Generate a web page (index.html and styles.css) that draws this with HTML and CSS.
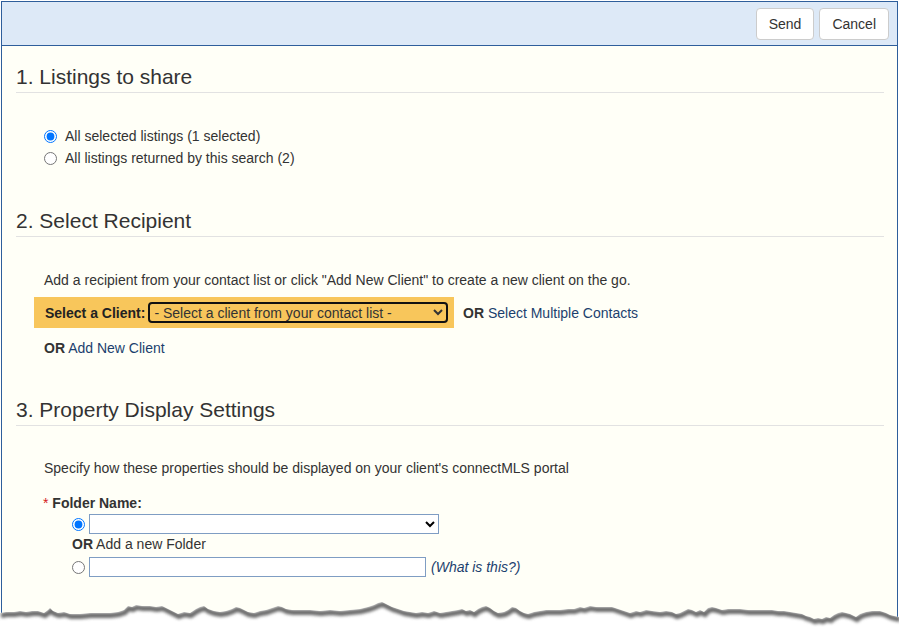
FILE: index.html
```html
<!DOCTYPE html>
<html>
<head>
<meta charset="utf-8">
<link rel="stylesheet" href="styles.css">
</head>
<body>
<div class="frame">
  <div class="toolbar">
    <button class="btn">Send</button>
    <button class="btn">Cancel</button>
  </div>
  <div class="content">
    <section class="sec sec1">
      <h2 class="sec-title">1. Listings to share</h2>
      <div class="sec-body radios">
        <label class="radio-row"><input type="radio" name="listings" checked><span>All selected listings (1 selected)</span></label>
        <label class="radio-row"><input type="radio" name="listings"><span>All listings returned by this search (2)</span></label>
      </div>
    </section>
    <section class="sec sec2">
      <h2 class="sec-title">2. Select Recipient</h2>
      <div class="sec-body">
        <p class="note">Add a recipient from your contact list or click "Add New Client" to create a new client on the go.</p>
        <div class="client-row">
          <div class="client-box">
            <span class="client-label">Select a Client:</span>
            <select class="client-select"><option>- Select a client from your contact list -</option></select>
          </div>
          <span class="or-line"><b>OR</b> <a class="link">Select Multiple Contacts</a></span>
        </div>
        <p class="or-line add-client"><b>OR</b> <a class="link">Add New Client</a></p>
      </div>
    </section>
    <section class="sec sec3">
      <h2 class="sec-title">3. Property Display Settings</h2>
      <div class="sec-body">
        <p class="note">Specify how these properties should be displayed on your client's connectMLS portal</p>
        <div class="folder">
          <div class="folder-label"><span class="req">*</span> <b>Folder Name:</b></div>
          <div class="folder-opts">
            <div class="folder-row first"><input type="radio" name="folder" checked><select class="folder-select"><option></option></select></div>
            <div class="or-line folder-or"><b>OR</b> Add a new Folder</div>
            <div class="folder-row second"><input type="radio" name="folder"><input type="text" class="folder-input"><a class="link what">(What is this?)</a></div>
          </div>
        </div>
      </div>
    </section>
  </div>
</div>
<svg class="torn" width="899" height="40" viewBox="0 598 899 40" xmlns="http://www.w3.org/2000/svg">
  <defs>
    <filter id="blur" x="-5%" y="-50%" width="110%" height="200%"><feGaussianBlur stdDeviation="1.6"/></filter>
    <clipPath id="below"><path d="M0,613 L6,612 14,612 20,611 26,612 32,611 38,611 44,613 48,610 50,608 53,611 58,613 64,612 70,614 80,614 90,613 100,613 110,613 118,612 124,610 128,606 132,607 136,605 142,606 150,606 156,607 162,606 166,608 170,610 174,612 178,614 184,612 190,613 196,609 200,607 204,606 208,609 214,611 220,612 226,611 232,609 236,607 240,608 244,610 248,612 254,613 260,611 266,610 272,608 278,606 282,607 286,609 292,610 300,610 310,610 320,611 330,610 340,611 350,610 360,609 368,607 374,605 378,603 382,602 386,604 392,607 398,609 404,611 410,612 416,613 422,612 428,613 434,611 440,613 446,612 452,611 458,610 462,609 466,611 470,610 474,612 478,609 482,607 486,606 490,608 494,611 498,613 504,612 508,610 512,607 516,608 520,611 524,613 528,614 534,612 540,611 546,610 552,610 560,610 568,609 574,609 580,607 584,608 590,606 596,607 604,607 612,607 618,609 624,611 630,613 636,611 640,612 646,610 652,611 660,612 666,611 672,612 676,614 680,613 684,611 688,609 692,610 696,612 700,610 704,612 708,608 712,607 716,608 722,610 728,609 734,609 740,609 748,610 756,610 764,610 772,610 778,611 784,611 790,612 796,613 802,614 806,616 810,617 814,619 818,618 822,619 826,617 830,618 834,615 838,613 842,612 846,613 850,614 856,617 860,614 866,612 872,611 880,611 886,613 890,615 894,616 899,617 L899,640 L0,640 Z"/></clipPath>
  </defs>
  <rect x="0" y="598" width="899" height="42" fill="#ffffff" clip-path="url(#below)"/>
  <g clip-path="url(#below)">
    <polyline filter="url(#blur)" transform="translate(1,2.5)" fill="none" stroke="#6a6a6a" stroke-width="5" points="0,613 6,612 14,612 20,611 26,612 32,611 38,611 44,613 48,610 50,608 53,611 58,613 64,612 70,614 80,614 90,613 100,613 110,613 118,612 124,610 128,606 132,607 136,605 142,606 150,606 156,607 162,606 166,608 170,610 174,612 178,614 184,612 190,613 196,609 200,607 204,606 208,609 214,611 220,612 226,611 232,609 236,607 240,608 244,610 248,612 254,613 260,611 266,610 272,608 278,606 282,607 286,609 292,610 300,610 310,610 320,611 330,610 340,611 350,610 360,609 368,607 374,605 378,603 382,602 386,604 392,607 398,609 404,611 410,612 416,613 422,612 428,613 434,611 440,613 446,612 452,611 458,610 462,609 466,611 470,610 474,612 478,609 482,607 486,606 490,608 494,611 498,613 504,612 508,610 512,607 516,608 520,611 524,613 528,614 534,612 540,611 546,610 552,610 560,610 568,609 574,609 580,607 584,608 590,606 596,607 604,607 612,607 618,609 624,611 630,613 636,611 640,612 646,610 652,611 660,612 666,611 672,612 676,614 680,613 684,611 688,609 692,610 696,612 700,610 704,612 708,608 712,607 716,608 722,610 728,609 734,609 740,609 748,610 756,610 764,610 772,610 778,611 784,611 790,612 796,613 802,614 806,616 810,617 814,619 818,618 822,619 826,617 830,618 834,615 838,613 842,612 846,613 850,614 856,617 860,614 866,612 872,611 880,611 886,613 890,615 894,616 899,617"/>
  </g>
</svg>
</body>
</html>
```
FILE: styles.css
```css
html, body {
  margin: 0;
  padding: 0;
  background: #ffffff;
  overflow: hidden;
}
body {
  font-family: "Liberation Sans", Arial, sans-serif;
  font-size: 14px;
  color: #333333;
  position: relative;
  width: 899px;
  height: 631px;
}
.frame {
  box-sizing: border-box;
  width: 897px;
  height: 660px;
  margin: 1px 0 0 1px;
  border: 1px solid #2e5e9b;
  background: #fffff7;
}
.toolbar {
  box-sizing: border-box;
  height: 44px;
  background: #dde9f7;
  border-bottom: 1px solid #2e5e9b;
  display: flex;
  justify-content: flex-end;
  align-items: flex-start;
  gap: 5px;
  padding: 6px 8px 0 0;
}
.btn {
  font-family: "Liberation Sans", Arial, sans-serif;
  font-size: 14px;
  color: #333333;
  background: #ffffff;
  border: 1px solid #cccccc;
  border-radius: 4px;
  height: 32px;
  padding: 0 12px;
  margin: 0;
}
.content {
  padding: 0 13px 0 14px;
}
.sec-title {
  margin: 0;
  font-weight: normal;
  font-size: 21px;
  line-height: 24px;
  color: #333333;
  padding-bottom: 3px;
  border-bottom: 1px solid #e2e2e2;
}
.sec1 .sec-title { margin-top: 19px; }
.sec2 .sec-title { margin-top: 40px; }
.sec3 .sec-title { margin-top: 41px; }
.sec-body {
  padding-left: 28px;
}
.radios {
  margin-top: 32px;
  display: flex;
  flex-direction: column;
}
.radio-row {
  display: flex;
  align-items: center;
  height: 22px;
}
.radio-row input {
  margin: 0 8px 0 0;
  width: 13px;
  height: 13px;
}
.note {
  margin: 0;
  line-height: 18px;
}
.sec2 .note { margin-top: 34px; }
.client-row {
  margin-top: 8px;
  margin-left: -10px;
  display: flex;
  align-items: center;
}
.client-box {
  box-sizing: border-box;
  width: 420px;
  height: 31px;
  background: #f8c65b;
  display: flex;
  align-items: center;
  padding-left: 11px;
}
.client-label {
  font-weight: bold;
  color: #222222;
  margin-right: 3px;
}
.client-select {
  box-sizing: border-box;
  width: 300px;
  height: 21px;
  border: 2px solid #111111;
  border-radius: 4px;
  background: #f8c65b;
  font-family: "Liberation Sans", Arial, sans-serif;
  font-size: 14px;
  color: #333333;
  padding: 0;
  margin: 0;
}
.or-line {
  line-height: 18px;
}
.client-row .or-line {
  margin-left: 9px;
}
.or-line b {
  color: #333333;
}
.link {
  color: #1c3f6e;
  text-decoration: none;
}
.add-client {
  margin: 11px 0 0 0;
}
.sec3 .note { margin-top: 33px; }
.folder {
  margin-top: 17px;
}
.folder-label {
  line-height: 18px;
  margin-left: -1px;
}
.req {
  color: #d42020;
}
.folder-label b {
  color: #333333;
}
.folder-opts {
  padding-left: 28px;
}
.folder-row {
  display: flex;
  align-items: center;
  height: 20px;
}
.folder-row.first { margin-top: 2px; }
.folder-or { margin-top: 1px; }
.folder-row.second { margin-top: 4px; }
.folder-row input[type="radio"] {
  margin: 0 4px 0 0;
  width: 13px;
  height: 13px;
}
.folder-select {
  box-sizing: border-box;
  width: 350px;
  height: 20px;
  border: 1px solid #7f9dc3;
  border-radius: 0;
  background: #ffffff;
  margin: 0;
  font-size: 13px;
}
.folder-input {
  box-sizing: border-box;
  width: 337px;
  height: 20px;
  border: 1px solid #7f9dc3;
  background: #ffffff;
  margin: 0;
  padding: 0 3px;
}
.what {
  font-style: italic;
  margin-left: 5px;
}
.torn {
  position: absolute;
  left: 0;
  top: 598px;
}
```
